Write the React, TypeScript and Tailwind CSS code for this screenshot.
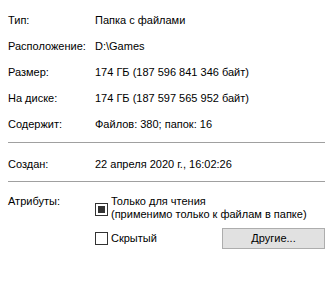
const rows: [string, string][] = [
  ['Тип:', 'Папка с файлами'],
  ['Расположение:', 'D:\\Games'],
  ['Размер:', '174 ГБ (187 596 841 346 байт)'],
  ['На диске:', '174 ГБ (187 597 565 952 байт)'],
  ['Содержит:', 'Файлов: 380; папок: 16'],
];

function Row({ label, value }: { label: string; value: string }) {
  return (
    <div className="flex h-[26px] items-center">
      <div className="w-[87px] shrink-0">{label}</div>
      <div>{value}</div>
    </div>
  );
}

export default function App() {
  return (
    <div className="w-[333px] h-[293px] bg-white px-2 pt-[7px] text-[11px] leading-[13px] text-black font-['Liberation_Sans',Arial,sans-serif]">
      {rows.map(([l, v]) => (
        <Row key={l} label={l} value={v} />
      ))}

      <div className="mt-[5px] h-px bg-[#a0a0a0]" />
      <div className="mt-[8px]">
        <Row label="Создан:" value="22 апреля 2020 г., 16:02:26" />
      </div>
      <div className="mt-[4px] h-px bg-[#a0a0a0]" />

      {/* Attributes */}
      <div className="mt-[13px] flex">
        <div className="w-[87px] shrink-0">Атрибуты:</div>
        <div className="flex-1">
          <div className="flex items-start">
            <div className="mt-[8px] flex h-[13px] w-[13px] shrink-0 items-center justify-center border border-[#333333] bg-white">
              <div className="h-[7px] w-[7px] bg-[#333333]" />
            </div>
            <div className="ml-[3px]">
              <div>Только для чтения</div>
              <div>(применимо только к файлам в папке)</div>
            </div>
          </div>
          <div className="mt-[7px] flex items-center">
            <div className="h-[13px] w-[13px] shrink-0 border border-[#333333] bg-white" />
            <div className="ml-[3px]">Скрытый</div>
            <button className="ml-auto h-[21px] w-[103px] border border-[#adadad] bg-[#e1e1e1] text-center">
              Другие...
            </button>
          </div>
        </div>
      </div>
    </div>
  );
}
